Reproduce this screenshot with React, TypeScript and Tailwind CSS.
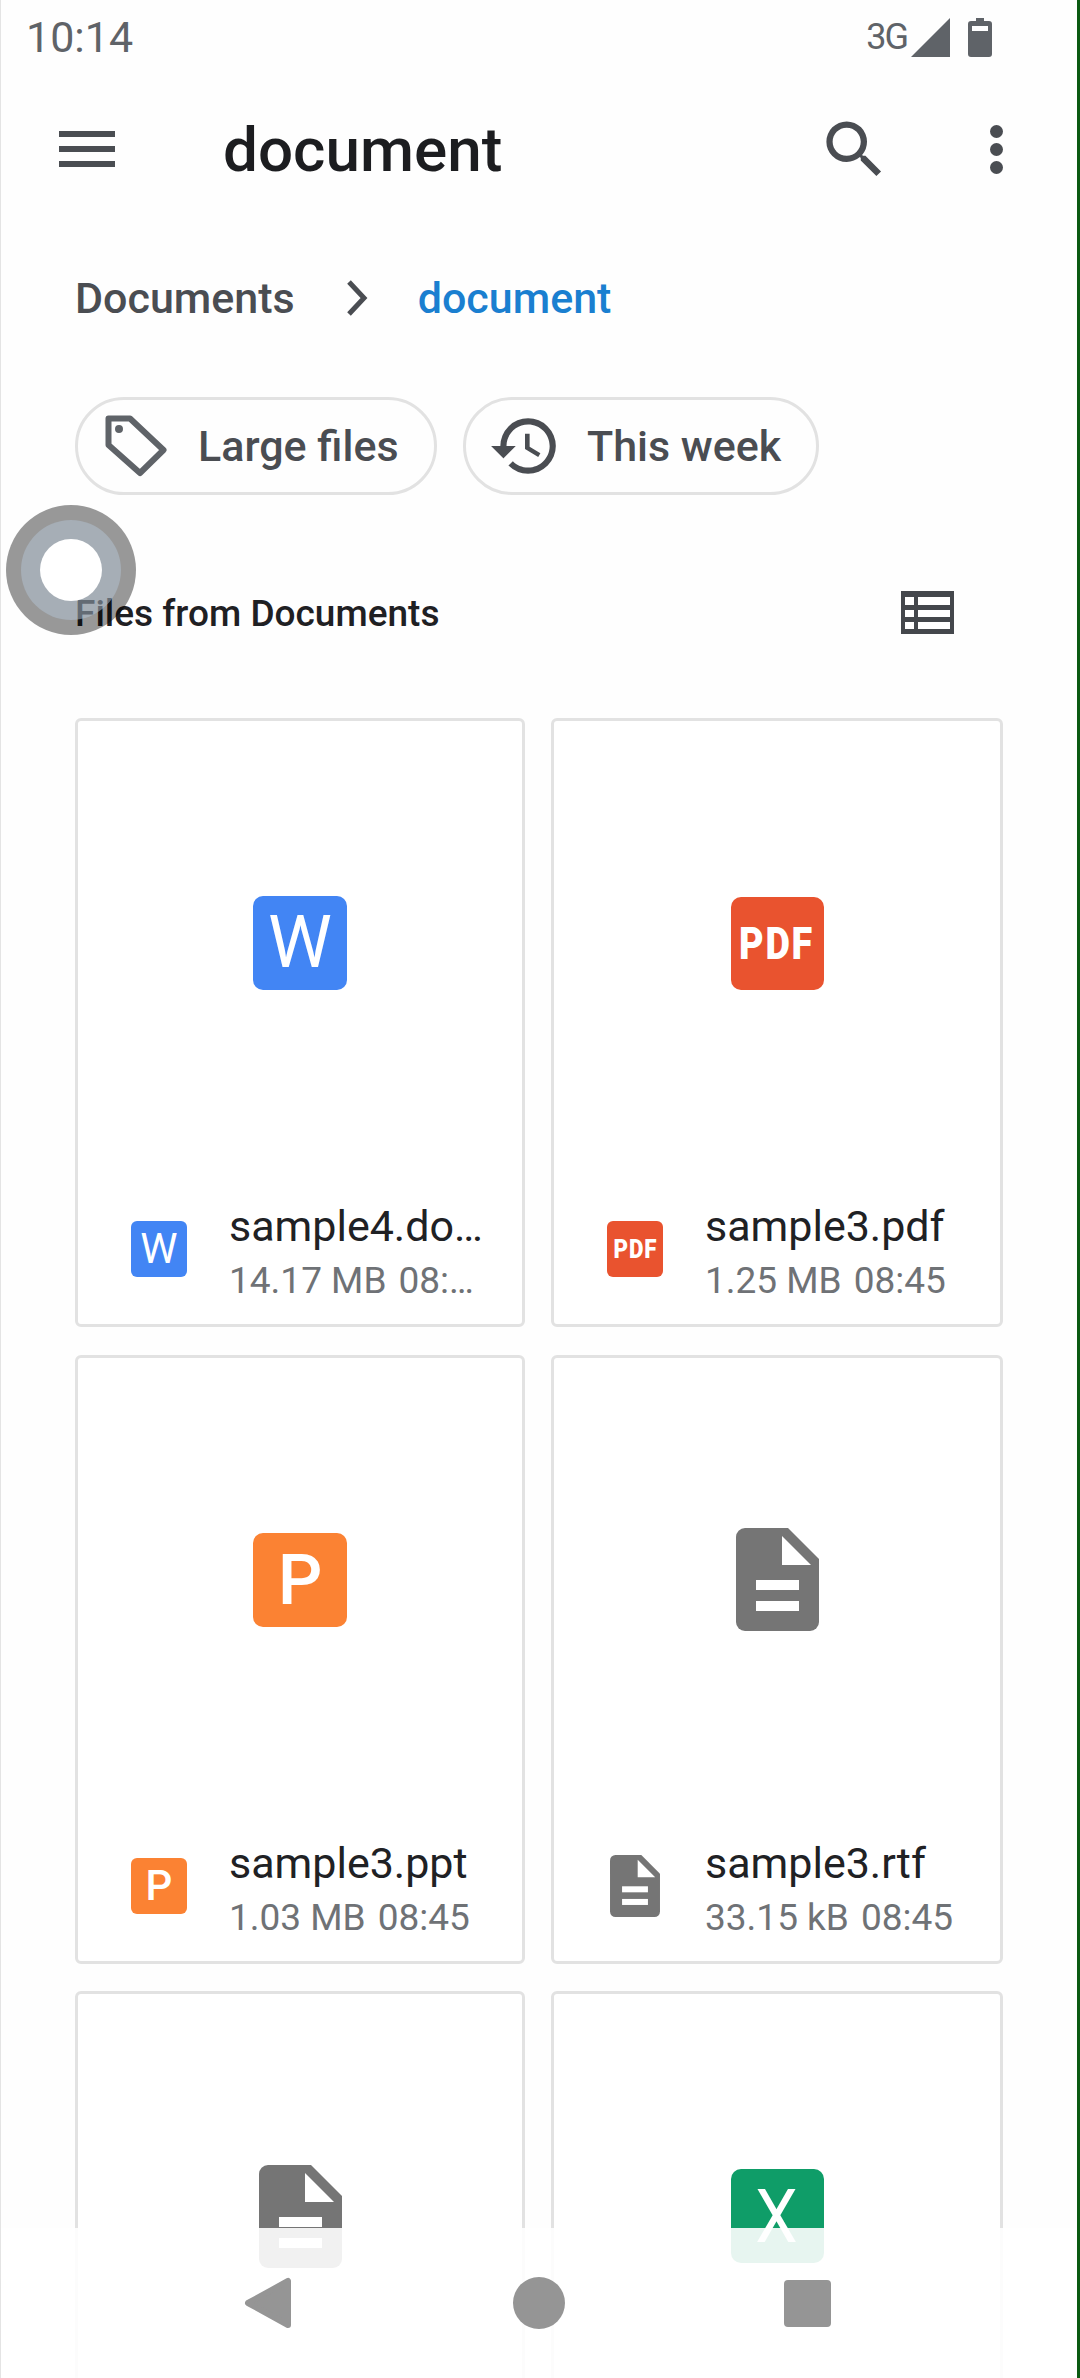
const font = "font-['Roboto',sans-serif]";

function FileGlyph({ className }: { className: string }) {
  return (
    <svg viewBox="0 0 83 103" className={className}>
      <path d="M9 0H52L83 31V94a9 9 0 0 1-9 9H9a9 9 0 0 1-9-9V9a9 9 0 0 1 9-9Z" fill="#757575" />
      <path d="M46 8L75 37H46Z" fill="#fff" />
      <rect x="20" y="52" width="43" height="10" fill="#fff" />
      <rect x="20" y="73" width="43" height="10" fill="#fff" />
    </svg>
  );
}

type Kind = "word" | "pdf" | "ppt" | "rtf" | "xls";

function LargeIcon({ kind }: { kind: Kind }) {
  if (kind === "rtf") return <FileGlyph className="w-[83px] h-[105px]" />;
  if (kind === "pdf") {
    return (
      <div className="w-[93px] h-[93px] rounded-[10px] bg-[#e9532f] flex items-center justify-center">
        <span className="text-white text-[45px] leading-none font-black tracking-[2px] scale-x-[0.84]">PDF</span>
      </div>
    );
  }
  if (kind === "ppt") {
    return (
      <div className="w-[94px] h-[94px] rounded-[10px] bg-[#fb8233] flex items-center justify-center">
        <span className="text-white text-[70px] leading-none font-medium">P</span>
      </div>
    );
  }
  if (kind === "xls") {
    return (
      <div className="w-[93px] h-[94px] rounded-[10px] bg-[#0f9d68] flex items-center justify-center">
        <span className="text-white text-[75px] leading-none scale-x-[0.9]">X</span>
      </div>
    );
  }
  return (
    <div className="w-[94px] h-[94px] rounded-[10px] bg-[#4285f4] flex items-center justify-center">
      <span className="text-white text-[72px] leading-none">W</span>
    </div>
  );
}

function SmallIcon({ kind }: { kind: Kind }) {
  if (kind === "rtf") return <FileGlyph className="w-[50px] h-[62px] -mt-[3px] ml-[3px] mr-[3px]" />;
  if (kind === "pdf") {
    return (
      <div className="w-[56px] h-[56px] rounded-[6px] bg-[#e9532f] flex items-center justify-center">
        <span className="text-white text-[26px] leading-none font-black tracking-[1px] scale-x-[0.86]">PDF</span>
      </div>
    );
  }
  if (kind === "ppt") {
    return (
      <div className="w-[56px] h-[56px] rounded-[6px] bg-[#fb8233] flex items-center justify-center">
        <span className="text-white text-[42px] leading-none font-medium">P</span>
      </div>
    );
  }
  return (
    <div className="w-[56px] h-[56px] rounded-[6px] bg-[#4285f4] flex items-center justify-center">
      <span className="text-white text-[42px] leading-none">W</span>
    </div>
  );
}

function Card({ kind, name, size, time }: { kind: Kind; name?: string; size?: string; time?: string }) {
  return (
    <div className="h-[609px] border-[3px] border-[#e2e2e2] rounded-[6px] bg-white flex flex-col">
      <div className="h-[444px] shrink-0 flex items-center justify-center">
        <LargeIcon kind={kind} />
      </div>
      {name && (
        <div className="flex items-start pl-[53px] pt-[35px]">
          <div className="mt-[21px] shrink-0">
            <SmallIcon kind={kind} />
          </div>
          <div className="ml-[42px] w-[258px] min-w-0">
            <p className="text-[43px] leading-[52px] text-[#202124] truncate">{name}</p>
            <p className="text-[37px] leading-[52px] mt-[3px] text-[#6f7276] truncate">
              {size}
              <span className="ml-[12px]">{time}</span>
            </p>
          </div>
        </div>
      )}
    </div>
  );
}

export default function App() {
  return (
    <div className={`${font} relative w-[1080px] h-[2378px] overflow-hidden bg-[#fefefe] border-l border-[#e4e4e4] border-r-[3px] border-r-[#0b5a12]`}>
      {/* Status bar */}
      <div className="h-[74px] flex items-center justify-between pl-[25px] pr-[85px]">
        <span className="text-[43px] leading-none text-[#5f6368]">10:14</span>
        <div className="flex items-center">
          <span className="text-[36px] leading-none tracking-[-2px] text-[#5f6368]">3G</span>
          <svg viewBox="0 0 39 39" className="w-[39px] h-[39px] ml-[4px]">
            <path d="M39 0V39H0Z" fill="#5f6368" />
          </svg>
          <svg viewBox="0 0 24 39" className="w-[24px] h-[39px] ml-[18px]">
            <path d="M8 0H16V3H21a3 3 0 0 1 3 3V36a3 3 0 0 1-3 3H3a3 3 0 0 1-3-3V6a3 3 0 0 1 3-3H8Z" fill="#5f6368" />
            <rect x="4" y="8" width="16" height="5" fill="#fff" />
          </svg>
        </div>
      </div>

      {/* Toolbar */}
      <div className="h-[150px] flex items-center pl-[58px] pr-[74px]">
        <div className="w-[56px] h-[36px] flex flex-col justify-between shrink-0">
          <div className="h-[6px] bg-[#4a4d52]" />
          <div className="h-[6px] bg-[#4a4d52]" />
          <div className="h-[6px] bg-[#4a4d52]" />
        </div>
        <h1 className="ml-[108px] flex-1 pt-[2px] text-[62px] leading-none font-medium text-[#1c1d20]">document</h1>
        <svg viewBox="0 0 24 24" className="w-[75px] h-[75px]" fill="#4a4d52">
          <path d="M15.5 14h-.79l-.28-.27A6.471 6.471 0 0 0 16 9.5 6.5 6.5 0 1 0 9.5 16c1.61 0 3.09-.59 4.23-1.57l.27.28v.79l5 4.99L20.49 19l-4.99-5zm-6 0C7.01 14 5 11.99 5 9.5S7.01 5 9.5 5 14 7.01 14 9.5 11.99 14 9.5 14z" />
        </svg>
        <svg viewBox="0 0 13 49" className="w-[13px] h-[49px] ml-[98px]" fill="#4a4d52">
          <circle cx="6.5" cy="6.5" r="6.5" />
          <circle cx="6.5" cy="24.5" r="6.5" />
          <circle cx="6.5" cy="42.5" r="6.5" />
        </svg>
      </div>

      {/* Breadcrumb */}
      <div className="mt-[34px] h-[80px] flex items-center pl-[74px] text-[43px] font-medium">
        <span className="text-[#4a4d52]">Documents</span>
        <svg viewBox="0 0 22 36" className="w-[22px] h-[36px] ml-[51px]" fill="none" stroke="#4a4d52" strokeWidth="5">
          <path d="M3 2L18 18L3 34" />
        </svg>
        <span className="ml-[50px] text-[#1a7fd0]">document</span>
      </div>

      {/* Filter chips */}
      <div className="mt-[59px] flex gap-[26px] pl-[74px]">
        <div className="w-[362px] h-[98px] rounded-full border-[3px] border-[#e2e2e2] flex items-center pl-[27px]">
          <svg viewBox="0 0 62 62" className="w-[62px] h-[62px]" fill="none" stroke="#5f6368" strokeWidth="6" strokeLinejoin="round">
            <path d="M3.5 3.5H25L58.5 35L35 58L3.5 30Z" />
            <circle cx="14" cy="14" r="3" fill="#5f6368" strokeWidth="2" />
          </svg>
          <span className="ml-[31px] text-[43px] leading-none font-medium text-[#4a4d52]">Large files</span>
        </div>
        <div className="w-[356px] h-[98px] rounded-full border-[3px] border-[#e2e2e2] flex items-center pl-[22px]">
          <svg viewBox="0 0 24 24" className="w-[74px] h-[74px]" fill="#4a4d52">
            <path d="M13 3a9 9 0 0 0-9 9H1l3.89 3.89.07.14L9 12H6c0-3.87 3.13-7 7-7s7 3.13 7 7-3.13 7-7 7c-1.93 0-3.68-.79-4.94-2.06l-1.42 1.42A8.954 8.954 0 0 0 13 21a9 9 0 0 0 0-18zm-1 5v5l4.28 2.54.72-1.21-3.5-2.08V8H12z" />
          </svg>
          <span className="ml-[25px] text-[43px] leading-none font-medium text-[#4a4d52]">This week</span>
        </div>
      </div>

      {/* Section heading */}
      <div className="mt-[87px] h-[60px] flex items-center justify-between pl-[74px] pr-[123px]">
        <span className="pt-[3px] text-[37px] leading-none font-medium text-[#1f2023]">Files from Documents</span>
        <svg viewBox="0 0 53 43" className="w-[53px] h-[43px]">
          <rect width="53" height="43" fill="#44474c" />
          <path d="M4 6H13V14H4ZM17 6H49V14H17ZM4 19H13V26H4ZM17 19H49V26H17ZM4 31H13V38H4ZM17 31H49V38H17Z" fill="#fff" />
        </svg>
      </div>

      {/* File grid */}
      <div className="mt-[76px] ml-[74px] w-[928px] grid grid-cols-[450px_452px] gap-x-[26px] gap-y-[27.5px]">
        <Card kind="word" name="sample4.docx" size="14.17 MB" time="08:45" />
        <Card kind="pdf" name="sample3.pdf" size="1.25 MB" time="08:45" />
        <Card kind="ppt" name="sample3.ppt" size="1.03 MB" time="08:45" />
        <Card kind="rtf" name="sample3.rtf" size="33.15 kB" time="08:45" />
        <Card kind="rtf" />
        <Card kind="xls" />
      </div>

      {/* Touch indicator */}
      <div className="absolute left-[5px] top-[505px] w-[130px] h-[130px] rounded-full bg-black/40 flex items-center justify-center">
        <div className="w-[100px] h-[100px] rounded-full bg-[#b4c4d4]/50 flex items-center justify-center">
          <div className="w-[62px] h-[62px] rounded-full bg-white" />
        </div>
      </div>

      {/* Navigation bar */}
      <div className="absolute left-0 right-0 bottom-0 h-[150px] bg-white/90 pt-[49px] pl-[243px]">
        <div className="flex items-center">
          <svg viewBox="0 0 48 52" className="w-[48px] h-[52px]" fill="#959595" stroke="#959595" strokeWidth="6" strokeLinejoin="round">
            <path d="M44 4V48L4 26Z" />
          </svg>
          <div className="ml-[221px] w-[52px] h-[52px] rounded-full bg-[#959595]" />
          <div className="ml-[219px] w-[47px] h-[47px] rounded-[4px] bg-[#959595]" />
        </div>
      </div>
    </div>
  );
}
